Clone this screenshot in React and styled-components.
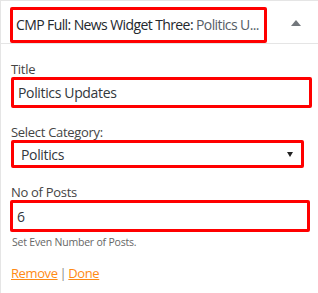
import React from "react";
import styled, { createGlobalStyle } from "styled-components";

const GlobalStyle = createGlobalStyle`
  html, body {
    margin: 0;
    padding: 0;
    background: #ffffff;
  }
  body {
    font-family: "Open Sans", "Noto Sans", sans-serif;
    color: #32373c;
  }
  * {
    box-sizing: border-box;
  }
`;

export default function App() {
  return (
    <>
      <GlobalStyle />
      <Widget>
        <WidgetTop>
          <WidgetTitle>
            CMP Full: News Widget Three: <InWidgetTitle>Politics U...</InWidgetTitle>
          </WidgetTitle>
          <ToggleArrow>
            <svg width="10" height="6" viewBox="0 0 10 6">
              <path d="M5 0 L10 6 L0 6 Z" fill="#72777c" />
            </svg>
          </ToggleArrow>
        </WidgetTop>
        <WidgetInside>
          <Label $top={17}>Title</Label>
          <TextInput $width={301} $height={31} defaultValue="Politics Updates" />

          <Label $top={16}>Select Category:</Label>
          <SelectBox>
            <span>Politics</span>
            <svg width="6" height="5" viewBox="0 0 6 5">
              <path d="M0 0 L6 0 L3 5 Z" fill="#222" />
            </svg>
          </SelectBox>

          <Label $top={16}>No of Posts</Label>
          <TextInput $width={300} $height={32} $shift={-1} defaultValue="6" />
          <Description>Set Even Number of Posts.</Description>

          <Actions>
            <ActionLink href="#">Remove</ActionLink>
            <Separator>|</Separator>
            <ActionLink href="#">Done</ActionLink>
          </Actions>
        </WidgetInside>
      </Widget>
    </>
  );
}

const Widget = styled.div`
  width: 318px;
  height: 293px;
  border-top: 1px solid #e5e5e5;
  border-left: 1px solid #e5e5e5;
  background: #ffffff;
  overflow: hidden;
`;

const WidgetTop = styled.div`
  display: flex;
  align-items: flex-start;
  height: 43px;
  padding: 6px 0 0 9px;
  border-bottom: 1px solid #e5e5e5;
`;

const WidgetTitle = styled.h3`
  margin: 0;
  width: 257px;
  height: 36px;
  padding: 0 0 0 3px;
  border: 3px solid #ff0000;
  border-radius: 2px;
  font-size: 14px;
  font-weight: 400;
  letter-spacing: -0.6px;
  line-height: 30px;
  color: #23282d;
  white-space: nowrap;
  overflow: hidden;
`;

const InWidgetTitle = styled.span`
  color: #555d66;
`;

const ToggleArrow = styled.span`
  display: flex;
  margin: 13px 17px 0 auto;
`;

const WidgetInside = styled.div`
  padding: 0 0 0 10px;
`;

const Label = styled.label`
  display: block;
  margin-top: ${(p) => p.$top}px;
  font-size: 13px;
  line-height: 16px;
  letter-spacing: -0.3px;
  color: #444444;
`;

const TextInput = styled.input`
  display: block;
  width: ${(p) => p.$width}px;
  height: ${(p) => p.$height}px;
  margin: 0 0 0 ${(p) => p.$shift || 0}px;
  padding: 0 0 0 4px;
  border: 3px solid #ff0000;
  border-radius: 2px;
  font-family: inherit;
  font-size: 14px;
  letter-spacing: -0.35px;
  color: #32373c;
  background: #ffffff;
  outline: none;
`;

const SelectBox = styled.div`
  display: flex;
  align-items: center;
  justify-content: space-between;
  width: 293px;
  height: 28px;
  padding: 0 8px 0 7px;
  border: 3px solid #ff0000;
  border-radius: 2px;
  font-size: 14px;
  letter-spacing: -0.35px;
  color: #32373c;
`;

const Description = styled.p`
  margin: 3px 0 0 1px;
  font-size: 10.5px;
  line-height: 15px;
  letter-spacing: -0.2px;
  color: #666666;
`;

const Actions = styled.div`
  margin-top: 14px;
  font-size: 13px;
  line-height: 18px;
  letter-spacing: -0.4px;
`;

const ActionLink = styled.a`
  color: #ff8a14;
  text-decoration: underline;
`;

const Separator = styled.span`
  margin: 0 2px 0 2px;
  color: #8a8a8a;
`;
